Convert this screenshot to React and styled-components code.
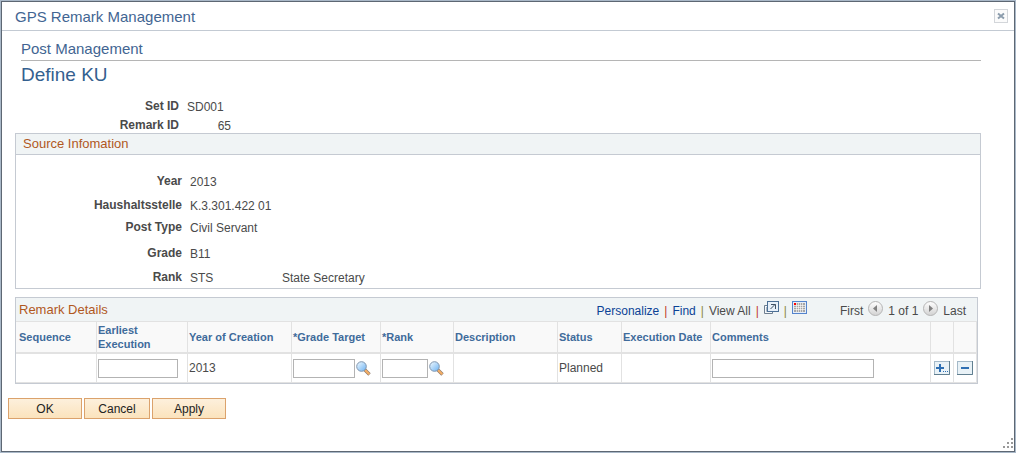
import styled, { createGlobalStyle } from "styled-components";

const GlobalStyle = createGlobalStyle`
  * {
    box-sizing: border-box;
  }
  body {
    margin: 0;
    background: #a9b8c8;
    color: #4a4a4a;
    font-family: "Liberation Sans", Arial, sans-serif;
    font-size: 12px;
  }
`;

const Page = styled.div`
  display: flex;
  min-height: 100vh;
  padding: 1px;
`;
const Dialog = styled.div`
  position: relative;
  flex: 1;
  border: 1px solid #5d6773;
  background: #fff;
`;
const TitleBar = styled.header`
  display: flex;
  justify-content: space-between;
  align-items: center;
  height: 29px;
  padding: 0 6px 0 13px;
  border-bottom: 1px solid #c3cad3;
`;
const DialogTitle = styled.h1`
  margin: 0;
  color: #426592;
  font-size: 15px;
  font-weight: normal;
`;
const CloseButton = styled.button`
  display: flex;
  align-items: center;
  justify-content: center;
  width: 14px;
  height: 14px;
  padding: 0;
  border: 1px solid #d3d6da;
  background: #fbfbfb;
`;
const Content = styled.main`
  padding: 9px 33px 0 13px;
`;
const SectionTitle = styled.h2`
  margin: 0 0 0 6px;
  height: 21px;
  border-bottom: 1px solid #b5b5b5;
  color: #426592;
  font-size: 15px;
  font-weight: normal;
  line-height: 18px;
`;
const PageTitle = styled.h3`
  margin: 0 0 6px 6px;
  color: #34608f;
  font-size: 19px;
  font-weight: normal;
  line-height: 28px;
`;
const Fields = styled.dl`
  margin: 0;
  padding: ${(props) => props.$pad || "0"};
`;
const Field = styled.div`
  display: flex;
  align-items: center;
  height: ${(props) => props.$height}px;
`;
const Label = styled.dt`
  width: ${(props) => props.$width}px;
  margin-right: 8px;
  font-weight: bold;
  text-align: right;
`;
const Value = styled.dd`
  min-width: ${(props) => props.$width || 44}px;
  margin: 0;
  padding-top: 1px;
  text-align: ${(props) => props.$align || "left"};
`;
const Box = styled.section`
  border: 1px solid #c5cad2;
`;
const BoxTitle = styled.h4`
  margin: 0;
  padding-left: 7px;
  border-bottom: 1px solid #c5cad2;
  background: #f0f4f5;
  color: #b0581e;
  font-size: 13px;
  font-weight: normal;
  line-height: 20px;
`;
const GridBox = styled.section`
  margin: 8px 3px 0 0;
  border: 1px solid #c5cad2;
`;
const GridBar = styled.div`
  display: flex;
  align-items: center;
  height: 23px;
  padding: 0 11px 0 3px;
  background: #f0f4f5;
`;
const GridTitle = styled.h4`
  flex: 1;
  margin: 0;
  color: #b0581e;
  font-size: 13px;
  font-weight: normal;
`;
const Tools = styled.div`
  display: flex;
  gap: 5px;
  height: 23px;
  padding-top: 2px;
  line-height: 23px;
  white-space: nowrap;
`;
const Paging = styled(Tools)`
  margin-left: 33px;
`;
const ToolLink = styled.a`
  color: #0b4295;
  text-decoration: none;
`;
const Bar = styled.span`
  color: ${(props) => props.$color || "#c0392b"};
`;
const IconButton = styled.button`
  display: block;
  height: 16px;
  padding: 0;
  border: 0;
  background: none;
  line-height: 0;
`;
const Table = styled.table`
  width: 100%;
  table-layout: fixed;
  border-collapse: separate;
  border-spacing: 0;
`;
const Th = styled.th`
  width: ${(props) => (props.$width ? props.$width + "px" : "auto")};
  height: 33px;
  padding: 0 1px;
  border-top: 1px solid #e2e2e2;
  border-right: 1px solid #e2e2e2;
  border-bottom: 2px solid #e2e2e2;
  background: #f9f9f9;
  color: #3f6b9b;
  font-size: 11px;
  line-height: 14px;
  text-align: left;

  &:first-child {
    padding-left: 3px;
  }
`;
const Td = styled.td`
  height: 29px;
  padding: 0 1px;
  border-right: 1px solid #e2e2e2;
  border-bottom: 1px solid #e2e2e2;
`;
const Cell = styled.div`
  display: flex;
  align-items: center;
  gap: 1px;
  justify-content: ${(props) => (props.$center ? "center" : "flex-start")};
`;
const TextInput = styled.input`
  width: ${(props) => props.$width}px;
  height: 19px;
  padding: 0 2px;
  border: 1px solid #b3b3b3;
  background: #fff;
  font: inherit;
`;
const Buttons = styled.footer`
  display: flex;
  gap: 2px;
  padding: 14px 6px 30px;
`;
const Button = styled.button`
  width: ${(props) => props.$width}px;
  height: 21px;
  padding: 0;
  border: 1px solid #dba26c;
  background: linear-gradient(#fdf0dc, #fbe3bd);
  color: #222;
  font: inherit;
`;
const Grip = styled.svg`
  position: absolute;
  right: 1px;
  bottom: 3px;
`;

const sourceFields = [
  { label: "Year", value: "2013", height: 24 },
  { label: "Haushaltsstelle", value: "K.3.301.422 01", height: 24 },
  { label: "Post Type", value: "Civil Servant", height: 20 },
  { label: "Grade", value: "B11", height: 32 },
  { label: "Rank", value: "STS", extra: "State Secretary", height: 16 },
];

function CloseIcon() {
  return (
    <svg width="8" height="8" viewBox="0 0 8 8">
      <path d="M1 1.5l6 5M7 1.5l-6 5" stroke="#8c9dad" strokeWidth="2" />
    </svg>
  );
}

function SearchIcon() {
  return (
    <svg width="15" height="15" viewBox="0 0 15 15">
      <defs>
        <linearGradient id="lens" x1="0" y1="0" x2="1" y2="1">
          <stop offset="0" stopColor="#f4fbff" />
          <stop offset="1" stopColor="#69b1f3" />
        </linearGradient>
      </defs>
      <path d="M8.5 8.5l5 5" stroke="#8d7a6c" strokeWidth="3.4" />
      <path d="M9 9l4.3 4.3" stroke="#f4ae65" strokeWidth="2.2" />
      <circle cx="5.5" cy="5.5" r="4.8" fill="url(#lens)" stroke="#7f95ae" />
    </svg>
  );
}

function PopupIcon() {
  return (
    <svg width="15" height="14" viewBox="0 0 15 14">
      <path d="M.5 4.5h8v8h-8z" fill="#f4f7fa" stroke="#6e7f90" />
      <path d="M2.5 6v4.500h6" fill="none" stroke="#a9b6c2" />
      <rect x="3.5" y=".5" width="11" height="10" fill="#e8f1fa" stroke="#4c7096" />
      <path d="M6.500 8l4.500-4.500M7 3.500h4.500V8" fill="none" stroke="#3f5164" />
    </svg>
  );
}

function SheetIcon() {
  return (
    <svg width="15" height="14" viewBox="0 0 15 14">
      <rect x=".5" y=".5" width="14" height="12" fill="#e5eef9" stroke="#5484cd" />
      <rect x="2" y="2" width="11" height="9" fill="#a5a5a5" />
      <path
        d="M4.5 2v9M6.5 2v9M8.5 2v9M10.5 2v9M2 4.5h11M2 6.5h11M2 8.5h11"
        stroke="#fff"
        strokeWidth=".6"
      />
      <rect x="2" y="2" width="2" height="2" fill="#f00" />
    </svg>
  );
}

function ArrowIcon({ next }) {
  return (
    <svg width="15" height="15" viewBox="0 0 15 15">
      <defs>
        <linearGradient id="disc" x1="0" y1="0" x2="0" y2="1">
          <stop offset="0" stopColor="#fff" />
          <stop offset="1" stopColor="#d2d2d2" />
        </linearGradient>
      </defs>
      <circle cx="7.5" cy="7.5" r="7" fill="url(#disc)" stroke="#b5b5b5" />
      <path d={next ? "M6 4l4 3.5L6 11z" : "M9 4L5 7.5 9 11z"} fill="#808080" />
    </svg>
  );
}

function RowIcon({ plus }) {
  return (
    <svg width="16" height="14" viewBox="0 0 16 14">
      <rect x=".5" y=".5" width="15" height="13" fill="#e9f2f7" stroke="#a4b9c8" />
      <path d="M15.5 0v13.5H0" fill="none" stroke="#617f90" />
      {plus ? (
        <path d="M2 7h8M6 3v8" stroke="#2f6fb3" strokeWidth="2" />
      ) : (
        <path d="M4 7h8" stroke="#2f6fb3" strokeWidth="2" />
      )}
      {plus ? (
        <path d="M9 10.5h1M11 10.5h1M13 10.5h1" stroke="#2f6fb3" />
      ) : null}
    </svg>
  );
}

function SourceInformation() {
  return (
    <Box>
      <BoxTitle>Source Infomation</BoxTitle>
      <Fields $pad="14px 0 3px">
        {sourceFields.map((field) => (
          <Field key={field.label} $height={field.height}>
            <Label $width={166}>{field.label}</Label>
            <Value $width={92}>{field.value}</Value>
            {field.extra ? <Value>{field.extra}</Value> : null}
          </Field>
        ))}
      </Fields>
    </Box>
  );
}

function RemarkDetails() {
  return (
    <GridBox>
      <GridBar>
        <GridTitle>Remark Details</GridTitle>
        <Tools>
          <ToolLink href="#personalize">Personalize</ToolLink>
          <Bar>|</Bar>
          <ToolLink href="#find">Find</ToolLink>
          <Bar $color="#8a8a3c">|</Bar>
          <span>View All</span>
          <Bar>|</Bar>
          <IconButton aria-label="Open in new window">
            <PopupIcon />
          </IconButton>
          <Bar $color="#8a8a3c">|</Bar>
          <IconButton aria-label="Download">
            <SheetIcon />
          </IconButton>
        </Tools>
        <Paging>
          <span>First</span>
          <IconButton aria-label="Previous">
            <ArrowIcon />
          </IconButton>
          <span>1 of 1</span>
          <IconButton aria-label="Next">
            <ArrowIcon next />
          </IconButton>
          <span>Last</span>
        </Paging>
      </GridBar>
      <Table>
        <thead>
          <tr>
            <Th $width={81}>Sequence</Th>
            <Th $width={91}>Earliest Execution</Th>
            <Th $width={104}>Year of Creation</Th>
            <Th $width={89}>*Grade Target</Th>
            <Th $width={73}>*Rank</Th>
            <Th $width={104}>Description</Th>
            <Th $width={64}>Status</Th>
            <Th $width={89}>Execution Date</Th>
            <Th>Comments</Th>
            <Th $width={23} aria-label="Add" />
            <Th $width={23} aria-label="Delete" />
          </tr>
        </thead>
        <tbody>
          <tr>
            <Td />
            <Td>
              <TextInput $width={80} aria-label="Earliest Execution" />
            </Td>
            <Td>2013</Td>
            <Td>
              <Cell>
                <TextInput $width={62} aria-label="Grade Target" />
                <IconButton aria-label="Look up Grade Target">
                  <SearchIcon />
                </IconButton>
              </Cell>
            </Td>
            <Td>
              <Cell>
                <TextInput $width={46} aria-label="Rank" />
                <IconButton aria-label="Look up Rank">
                  <SearchIcon />
                </IconButton>
              </Cell>
            </Td>
            <Td />
            <Td>Planned</Td>
            <Td />
            <Td>
              <TextInput $width={162} aria-label="Comments" />
            </Td>
            <Td>
              <Cell $center>
                <IconButton aria-label="Add row">
                  <RowIcon plus />
                </IconButton>
              </Cell>
            </Td>
            <Td>
              <Cell $center>
                <IconButton aria-label="Delete row">
                  <RowIcon />
                </IconButton>
              </Cell>
            </Td>
          </tr>
        </tbody>
      </Table>
    </GridBox>
  );
}

function App() {
  return (
    <Page>
      <GlobalStyle />
      <Dialog role="dialog" aria-label="GPS Remark Management">
        <TitleBar>
          <DialogTitle>GPS Remark Management</DialogTitle>
          <CloseButton aria-label="Close">
            <CloseIcon />
          </CloseButton>
        </TitleBar>
        <Content>
          <SectionTitle>Post Management</SectionTitle>
          <PageTitle>Define KU</PageTitle>
          <Fields>
            <Field $height={22}>
              <Label $width={164}>Set ID</Label>
              <Value>SD001</Value>
            </Field>
            <Field $height={16}>
              <Label $width={164}>Remark ID</Label>
              <Value $align="right">65</Value>
            </Field>
          </Fields>
          <SourceInformation />
          <RemarkDetails />
        </Content>
        <Buttons>
          <Button $width={74}>OK</Button>
          <Button $width={66}>Cancel</Button>
          <Button $width={74}>Apply</Button>
        </Buttons>
        <Grip width="10" height="10" viewBox="0 0 10 10" fill="#999">
          <path d="M8 0h2v2H8zM4 4h2v2H4zM8 4h2v2H8zM0 8h2v2H0zM4 8h2v2H4zM8 8h2v2H8z" />
        </Grip>
      </Dialog>
    </Page>
  );
}

export default App;
